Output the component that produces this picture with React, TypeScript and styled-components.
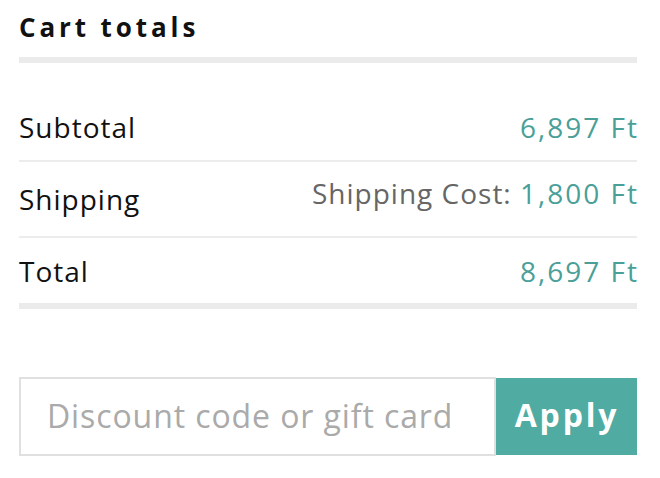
import React from "react";
import styled, { createGlobalStyle } from "styled-components";

const GlobalStyle = createGlobalStyle`
  html, body { margin: 0; padding: 0; background: #ffffff; }
  body { font-family: "Open Sans", "Noto Sans", sans-serif; }
  * { box-sizing: border-box; }
`;

const Wrapper = styled.section`
  width: 660px;
  padding: 0 23px 0 19px;
`;

const Title = styled.h2`
  margin: 0;
  padding-top: 10px;
  height: 63px;
  border-bottom: 6px solid #ebebeb;
  font-family: "Open Sans", sans-serif;
  font-weight: 700;
  font-size: 26px;
  line-height: 35px;
  letter-spacing: 3.9px;
  color: #111111;
`;

const Table = styled.div`
  margin-top: 31px;
  border-bottom: 6px solid #ebebeb;
`;

const Row = styled.div<{ $h: number; $divider?: boolean }>`
  display: flex;
  justify-content: space-between;
  align-items: center;
  height: ${(p) => p.$h}px;
  border-top: ${(p) => (p.$divider ? "2px solid #ececec" : "none")};
`;

const Label = styled.span`
  font-size: 28px;
  letter-spacing: 1px;
  color: #111111;
`;

const Value = styled.span<{ $lift?: number }>`
  font-size: 28px;
  letter-spacing: 2px;
  color: #4a9f99;
  padding-bottom: ${(p) => p.$lift ?? 0}px;
  margin-right: -2px;
`;

const Muted = styled.span`
  color: #666666;
  letter-spacing: 1px;
`;

const Form = styled.form`
  display: flex;
  margin-top: 68px;
`;

const Input = styled.input`
  flex: 1;
  height: 79px;
  border: 2px solid #e0e0e0;
  padding: 0 0 2px 26px;
  font-family: "Open Sans", sans-serif;
  font-size: 32px;
  letter-spacing: 0.9px;
  color: #333;
  outline: none;
  &::placeholder {
    color: #aaaaaa;
    font-weight: 400;
  }
`;

const Button = styled.button`
  width: 141px;
  height: 77px;
  margin-top: 1px;
  border: none;
  background: #50aca3;
  color: #ffffff;
  font-family: "Open Sans", sans-serif;
  font-weight: 700;
  font-size: 32px;
  letter-spacing: 2.8px;
  padding: 0 0 4px 1px;
  cursor: pointer;
`;

export default function App() {
  return (
    <>
      <GlobalStyle />
      <Wrapper>
        <Title>Cart totals</Title>
        <Table>
          <Row $h={66}>
            <Label>Subtotal</Label>
            <Value>6,897 Ft</Value>
          </Row>
          <Row $h={76} $divider>
            <Label>Shipping</Label>
            <Value $lift={12}>
              <Muted>Shipping Cost: </Muted>1,800 Ft
            </Value>
          </Row>
          <Row $h={67} $divider>
            <Label>Total</Label>
            <Value>8,697 Ft</Value>
          </Row>
        </Table>
        <Form onSubmit={(e) => e.preventDefault()}>
          <Input placeholder="Discount code or gift card" />
          <Button type="submit">Apply</Button>
        </Form>
      </Wrapper>
    </>
  );
}
